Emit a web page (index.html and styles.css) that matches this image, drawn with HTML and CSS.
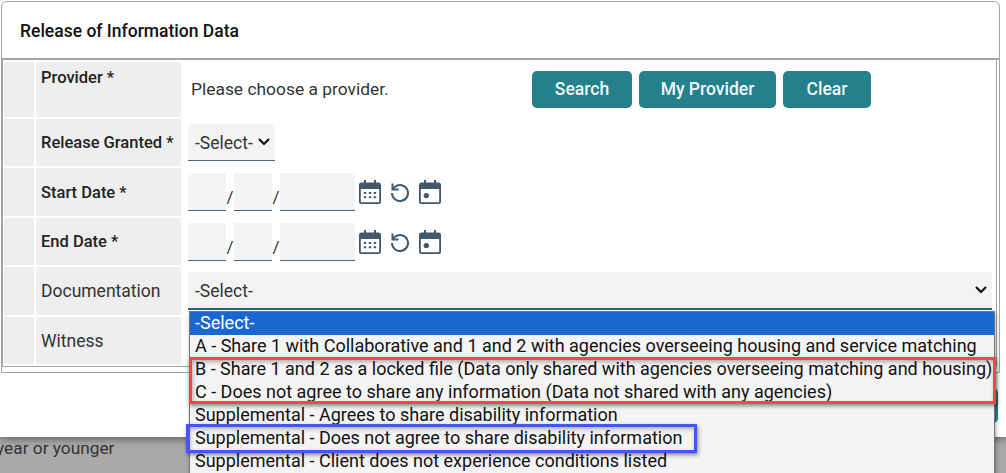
FILE: index.html
```html
<!DOCTYPE html>
<html lang="en">
<head>
  <meta charset="UTF-8" />
  <title>Release of Information Data</title>
  <link rel="stylesheet" href="styles.css">
</head>
<body>
  <svg class="icon-defs" width="0" height="0">
    <symbol id="icon-calendar" viewBox="0 0 22 24">
      <path fill-rule="evenodd" d="M5 0h2v2.600h8V0h2v2.600h2.500A2.500 2.500 0 0 1 22 5.100v16.400a2.500 2.500 0 0 1-2.500 2.500h-17A2.500 2.500 0 0 1 0 21.500V5.100a2.500 2.500 0 0 1 2.500-2.600H5zM1.800 9v12.400a.8.800 0 0 0 .8.800h16.800a.8.800 0 0 0 .8-.8V9z"/>
      <path d="M4.800 12h2.400v2H4.800zm5 0h2.400v2H9.800zm5 0h2.400v2h-2.400zM4.800 16.200h2.400v2H4.800zm5 0h2.400v2H9.800zm5 0h2.400v2h-2.400z"/>
    </symbol>
    <symbol id="icon-reset" viewBox="0 0 20 20">
      <path fill="none" stroke="#41596b" stroke-width="2" d="M2 11a8 8 0 1 0 3-6.200L3 6.600"/>
      <path fill="none" stroke="#41596b" stroke-width="2" d="M2.500 1.500v6h6"/>
    </symbol>
    <symbol id="icon-today" viewBox="0 0 22 24">
      <path fill-rule="evenodd" d="M5 0h2v2.600h8V0h2v2.600h2.500A2.500 2.500 0 0 1 22 5.100v16.400a2.500 2.500 0 0 1-2.500 2.500h-17A2.500 2.500 0 0 1 0 21.500V5.100a2.500 2.500 0 0 1 2.500-2.600H5zM1.800 9v12.400a.8.800 0 0 0 .8.800h16.800a.8.800 0 0 0 .8-.8V9z"/>
      <circle cx="7.300" cy="15.600" r="2.700"/>
    </symbol>
  </svg>

  <div class="backdrop-text">year or younger</div>

  <div class="modal">
    <div class="card">
      <h2 class="card-title">Release of Information Data</h2>
      <div class="form-grid">
        <div class="spacer row-provider"></div>
        <div class="label label-top">Provider *</div>
        <div class="value provider-value">
          <span class="provider-text">Please choose a provider.</span>
          <div class="button-row">
            <button class="btn btn-search">Search</button>
            <button class="btn btn-mine">My Provider</button>
            <button class="btn btn-clear">Clear</button>
          </div>
        </div>

        <div class="spacer"></div>
        <div class="label">Release Granted *</div>
        <div class="value">
          <select class="select select-small"><option>-Select-</option></select>
        </div>

        <div class="spacer"></div>
        <div class="label">Start Date *</div>
        <div class="value date-value">
          <input class="date date-part" />
          <span class="slash">/</span>
          <input class="date date-part" />
          <span class="slash">/</span>
          <input class="date date-year" />
          <svg class="icon icon-cal"><use href="#icon-calendar"/></svg>
          <svg class="icon icon-undo"><use href="#icon-reset"/></svg>
          <svg class="icon icon-cal"><use href="#icon-today"/></svg>
        </div>

        <div class="spacer"></div>
        <div class="label">End Date *</div>
        <div class="value date-value">
          <input class="date date-part" />
          <span class="slash">/</span>
          <input class="date date-part" />
          <span class="slash">/</span>
          <input class="date date-year" />
          <svg class="icon icon-cal"><use href="#icon-calendar"/></svg>
          <svg class="icon icon-undo"><use href="#icon-reset"/></svg>
          <svg class="icon icon-cal"><use href="#icon-today"/></svg>
        </div>

        <div class="spacer"></div>
        <div class="label label-plain">Documentation</div>
        <div class="value">
          <select class="select select-wide"><option>-Select-</option></select>
        </div>

        <div class="spacer"></div>
        <div class="label label-plain">Witness</div>
        <div class="value"></div>
      </div>
    </div>
    <div class="modal-footer">
      <button class="btn btn-footer">Save</button>
    </div>
  </div>

  <!-- open list of the Documentation select -->
  <ul class="dropdown">
    <li class="selected">-Select-</li>
    <li>A - Share 1 with Collaborative and 1 and 2 with agencies overseeing housing and service matching</li>
    <li>B - Share 1 and 2 as a locked file (Data only shared with agencies overseeing matching and housing)</li>
    <li>C - Does not agree to share any information (Data not shared with any agencies)</li>
    <li>Supplemental - Agrees to share disability information</li>
    <li>Supplemental - Does not agree to share disability information</li>
    <li>Supplemental - Client does not experience conditions listed</li>
  </ul>

  <!-- highlight boxes drawn on the screenshot -->
  <div class="mark mark-red"></div>
  <div class="mark mark-blue"></div>
</body>
</html>
```

FILE: styles.css
```css
* {
  box-sizing: border-box;
}

html, body {
  height: 473px;
}

body {
  margin: 0;
  position: relative;
  overflow: hidden;
  background-color: #a9a9a9;
  color: #333;
  font-family: Roboto, "Liberation Sans", sans-serif;
  font-size: 16.5px;
}

.icon-defs {
  position: absolute;
}

.backdrop-text {
  position: absolute;
  top: 438px;
  left: -4px;
  font-size: 17.3px;
  line-height: 20px;
  color: #333;
}

.modal {
  position: relative;
  height: 437px;
  padding: 1px 6px 0 1px;
  background-color: #fff;
  box-shadow: 0 2px 8px rgba(0, 0, 0, 0.45);
}

.card {
  height: 372px;
  border: 1px solid #a3a3a3;
  border-top-left-radius: 6px;
  border-top-right-radius: 6px;
}

.card-title {
  height: 58px;
  margin: 0;
  padding-left: 18px;
  border-bottom: 2px solid #a3a3a3;
  color: #111;
  font-size: 17.5px;
  font-weight: 500;
  line-height: 58px;
}

.form-grid {
  display: grid;
  grid-template-columns: 30px 145px 1fr;
  grid-template-rows: 55px 47px 48px 47px 48px 47px;
  align-content: start;
  gap: 2px;
  height: 307px;
  padding: 2px 2px 1px 1px;
  margin-right: 2px;
  border: 1px solid #a3a3a3;
  border-top: none;
}

.spacer, .label {
  background-color: #eee;
}

.label {
  display: flex;
  align-items: center;
  padding-left: 5px;
  color: #222;
  font-weight: 500;
  white-space: nowrap;
}

.label-top {
  align-items: flex-start;
  padding-top: 6px;
}

.label-plain {
  color: #333;
  font-size: 17.5px;
  font-weight: 400;
}

.value {
  display: flex;
  align-items: center;
  padding-left: 5px;
}

.provider-text {
  width: 344px;
  padding-left: 3px;
  font-size: 17.4px;
}

.provider-value {
  padding-bottom: 1px;
}

.button-row {
  display: flex;
  gap: 7px;
}

.btn {
  height: 37px;
  padding: 0;
  border: none;
  border-radius: 5px;
  background-color: #24808a;
  color: #f2f7f8;
  font-family: inherit;
  font-size: 17.5px;
  font-weight: 500;
}

.btn-search {
  width: 100px;
}

.btn-mine {
  width: 137px;
}

.btn-clear {
  width: 88px;
}

.select {
  height: 37px;
  padding: 2px 0 0 7px;
  border: none;
  border-bottom: 1px solid #4b6a7d;
  border-radius: 4px 4px 0 0;
  appearance: none;
  background-color: #f3f3f3;
  background-image: url("data:image/svg+xml,%3Csvg xmlns='http://www.w3.org/2000/svg' width='12' height='8'%3E%3Cpath fill='none' stroke='%23111' stroke-width='2.200' d='M1 1l5 5 5-5'/%3E%3C/svg%3E");
  background-repeat: no-repeat;
  background-position: right 5px center;
  color: #333;
  font-family: inherit;
  font-size: 17.5px;
}

.select-small {
  width: 87px;
}

.select-wide {
  width: 804px;
  height: 38px;
  border-bottom: 2px solid #16706f;
}

.date {
  height: 38px;
  padding: 0;
  border: none;
  border-bottom: 1px solid #4b6a7d;
  background-color: #f3f3f3;
}

.date-part {
  width: 38px;
}

.date-year {
  width: 75px;
}

.slash {
  width: 8px;
  padding-top: 10px;
  font-size: 17px;
  text-align: center;
}

.icon {
  fill: #41596b;
}

.icon-cal {
  width: 22px;
  height: 24px;
}

.icon-undo {
  width: 20px;
  height: 20px;
  margin: 0 9px;
}

.date-value .date + .icon {
  margin-left: 4px;
}

.modal-footer {
  display: flex;
  justify-content: flex-end;
  padding: 15px 2px 0 0;
}

.btn-footer {
  width: 80px;
  height: 35px;
}

.dropdown {
  position: absolute;
  top: 311px;
  left: 189px;
  width: 806px;
  height: 180px;
  margin: 0;
  padding: 0;
  list-style: none;
  border: 1px solid #767676;
  border-bottom: none;
  background-color: #f4f4f4;
  box-shadow: 1px 2px 4px rgba(0, 0, 0, 0.35);
  color: #111;
  font-size: 18px;
}

.dropdown li {
  height: 23px;
  padding-left: 5px;
  line-height: 21px;
  white-space: nowrap;
}

.dropdown .selected {
  background-color: #1a67d2;
  color: #fff;
}

.mark {
  position: absolute;
  border-style: solid;
  border-width: 3px;
  box-shadow: 1px 2px 4px rgba(0, 0, 0, 0.45), inset 1px 2px 4px rgba(0, 0, 0, 0.3);
}

.mark-red {
  top: 357px;
  left: 189px;
  width: 807px;
  height: 47px;
  border-color: #f94449;
}

.mark-blue {
  top: 424px;
  left: 186px;
  width: 511px;
  height: 29px;
  border-color: #4257f5;
}
```
